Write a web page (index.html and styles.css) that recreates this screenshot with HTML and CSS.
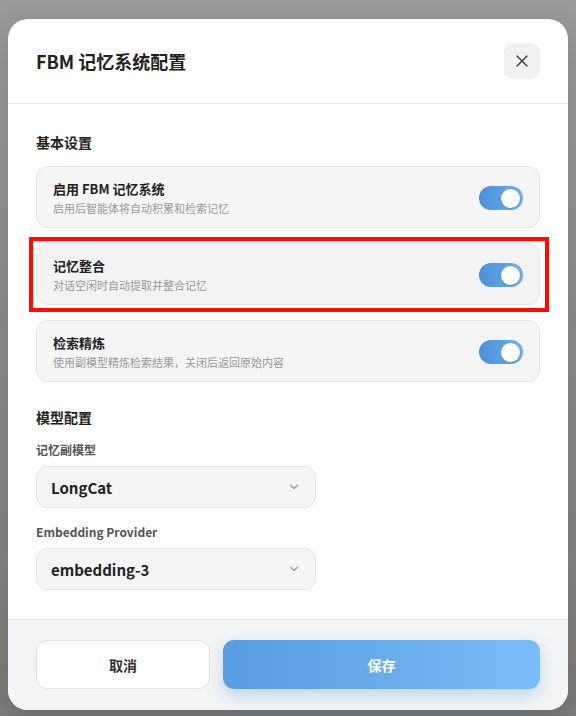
FILE: index.html
```html
<!DOCTYPE html>
<html lang="zh-CN">
<head>
<meta charset="utf-8">
<title>FBM 记忆系统配置</title>
<link rel="stylesheet" href="styles.css">
</head>
<body>
<div class="backdrop">
  <div class="modal">
    <div class="modal-header">
      <h2 class="modal-title">FBM 记忆系统配置</h2>
      <button class="close-btn" aria-label="关闭">
        <svg width="12" height="12" viewBox="0 0 12 12"><path d="M1 1L11 11M11 1L1 11" stroke="#444" stroke-width="1.5" stroke-linecap="round" fill="none"/></svg>
      </button>
    </div>
    <div class="modal-body">
      <div class="section-title">基本设置</div>
      <div class="cards">
        <div class="card">
          <div class="card-text">
            <div class="card-title">启用 FBM 记忆系统</div>
            <div class="card-sub">启用后智能体将自动积累和检索记忆</div>
          </div>
          <div class="toggle"><span class="knob"></span></div>
        </div>
        <div class="card highlighted">
          <div class="card-text">
            <div class="card-title">记忆整合</div>
            <div class="card-sub">对话空闲时自动提取并整合记忆</div>
          </div>
          <div class="toggle"><span class="knob"></span></div>
          <span class="annot"></span>
        </div>
        <div class="card">
          <div class="card-text">
            <div class="card-title">检索精炼</div>
            <div class="card-sub">使用副模型精炼检索结果，关闭后返回原始内容</div>
          </div>
          <div class="toggle"><span class="knob"></span></div>
        </div>
      </div>
      <div class="section-title section-gap">模型配置</div>
      <div class="field-label first">记忆副模型</div>
      <div class="select">
        <span class="select-value">LongCat</span>
        <svg class="chev" width="10" height="6" viewBox="0 0 10 6"><path d="M1.5 1.2L5 4.5L8.5 1.2" stroke="#9a9a9a" stroke-width="1.2" fill="none" stroke-linecap="round" stroke-linejoin="round"/></svg>
      </div>
      <div class="field-label">Embedding Provider</div>
      <div class="select">
        <span class="select-value">embedding-3</span>
        <svg class="chev" width="10" height="6" viewBox="0 0 10 6"><path d="M1.5 1.2L5 4.5L8.5 1.2" stroke="#9a9a9a" stroke-width="1.2" fill="none" stroke-linecap="round" stroke-linejoin="round"/></svg>
      </div>
    </div>
    <div class="modal-footer">
      <button class="btn btn-cancel">取消</button>
      <button class="btn btn-save">保存</button>
    </div>
  </div>
</div>
</body>
</html>
```
FILE: styles.css
```css
* { box-sizing: border-box; }
html, body { margin: 0; padding: 0; }
body {
  width: 576px;
  height: 716px;
  overflow: hidden;
  font-family: "Noto Sans CJK SC", "Noto Sans", sans-serif;
  background: linear-gradient(180deg, #9a9a9a 0%, #8c8c8c 50%, #7c7c7c 100%);
}
.backdrop {
  padding: 19px 8px 6px;
}
.modal {
  width: 560px;
  height: 691px;
  background: #fff;
  border-radius: 20px;
  overflow: hidden;
  display: flex;
  flex-direction: column;
  box-shadow: 0 10px 30px rgba(0,0,0,0.15);
}
.modal-header {
  height: 85px;
  padding: 0 28px;
  display: flex;
  align-items: center;
  justify-content: space-between;
  border-bottom: 1px solid #e4e4e4;
  flex: none;
}
.modal-title {
  margin: 0;
  font-size: 18px;
  font-weight: 700;
  color: #222;
  line-height: 24px;
}
.close-btn {
  width: 36px;
  height: 36px;
  border: none;
  border-radius: 9px;
  background: #f1f1f1;
  display: flex;
  align-items: center;
  justify-content: center;
  padding: 0;
}
.modal-body {
  flex: 1;
  padding: 28px 28px 29px;
}
.section-title {
  font-size: 14px;
  font-weight: 700;
  color: #222;
  line-height: 20px;
}
.section-gap { margin-top: 25px; }
.cards {
  margin-top: 14px;
  display: flex;
  flex-direction: column;
  gap: 15px;
}
.card {
  position: relative;
  height: 62px;
  padding: 13px 16px 11px;
  background: #f5f5f5;
  border: 1px solid #e5e5e5;
  border-radius: 12px;
  display: flex;
  align-items: center;
  justify-content: space-between;
}
.highlighted { background: #f3f3f3; }
.card-title {
  font-size: 13px;
  font-weight: 700;
  color: #222;
  line-height: 18px;
}
.card-sub {
  margin-top: 2px;
  font-size: 11px;
  color: #9a9a9a;
  line-height: 16px;
}
.toggle {
  width: 44px;
  height: 24px;
  border-radius: 12px;
  background: linear-gradient(90deg, #4b8fd8, #6db1ef);
  position: relative;
  flex: none;
}
.knob {
  position: absolute;
  right: 3px;
  top: 2.5px;
  width: 19px;
  height: 19px;
  border-radius: 50%;
  background: #fff;
  box-shadow: 0 1px 2px rgba(0,0,0,0.15);
}
.annot {
  position: absolute;
  left: -8px;
  right: -10px;
  top: -7px;
  bottom: -8px;
  border: 4px solid #ff0a00;
  pointer-events: none;
}
.field-label {
  margin-top: 16px;
  font-size: 12px;
  font-weight: 700;
  color: #555;
  line-height: 16px;
}
.field-label.first { margin-top: 15px; }
.select {
  margin-top: 8px;
  width: 280px;
  height: 42px;
  background: #f5f5f5;
  border: 1px solid #e5e5e5;
  border-radius: 11px;
  padding: 0 16px 0 14px;
  display: flex;
  align-items: center;
  justify-content: space-between;
}
.select-value {
  font-size: 15px;
  font-weight: 700;
  color: #222;
}
.modal-footer {
  flex: none;
  height: 92px;
  border-top: 1px solid #e2e2e2;
  background: #f3f4f5;
  padding: 20px 28px 0;
  display: flex;
  gap: 13px;
}
.btn {
  height: 49px;
  border-radius: 11px;
  font-family: inherit;
  font-size: 14px;
  font-weight: 700;
}
.btn-cancel {
  width: 174px;
  background: #fff;
  border: 1px solid #e0e0e0;
  color: #333;
}
.btn-save {
  flex: 1;
  border: none;
  color: #fff;
  background: linear-gradient(90deg, #5a9de0 0%, #6aadeb 55%, #7bbdf7 100%);
  box-shadow: 0 6px 16px rgba(74,144,217,0.3);
}
```
